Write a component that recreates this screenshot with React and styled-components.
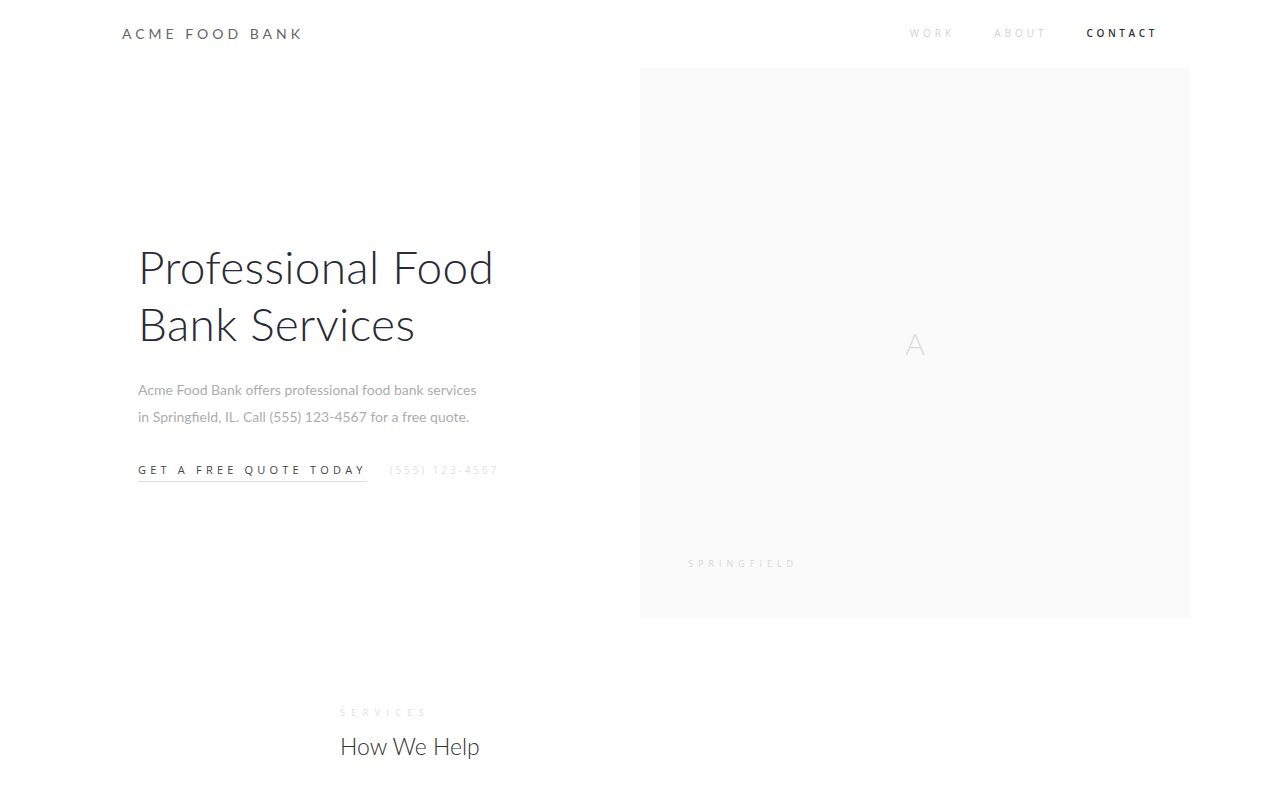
import React from "react";
import styled, { createGlobalStyle } from "styled-components";

const GlobalStyle = createGlobalStyle`
  html, body {
    margin: 0;
    padding: 0;
    background: #fff;
  }
  body {
    font-family: "Lato", "Open Sans", sans-serif;
    -webkit-font-smoothing: antialiased;
  }
  * { box-sizing: border-box; }
`;

const navLinks = [
    {label: "Work", active: false},
    {label: "About", active: false},
    {label: "Contact", active: true},
];

const Page = styled.div`
  width: 100%;
  overflow: hidden;
`;

const Header = styled.header`
  max-width: 1100px;
  margin: 0 auto;
  height: 68px;
  padding: 0 32px 2px;
  display: flex;
  align-items: center;
  justify-content: space-between;
`;

const Logo = styled.a`
  font-family: "Lato", sans-serif;
  font-size: 14px;
  font-weight: 400;
  letter-spacing: 4px;
  color: #666;
  text-transform: uppercase;
  text-decoration: none;
`;

const Nav = styled.nav`
  display: flex;
  gap: 39px;
`;

const NavLink = styled.a`
  font-family: "Open Sans", sans-serif;
  font-size: 10px;
  font-weight: ${p => (p.$active ? 600 : 400)};
  letter-spacing: ${p => (p.$active ? "3.6px" : "4px")};
  text-transform: uppercase;
  color: ${p => (p.$active ? "#333" : "#d2d2d2")};
  text-decoration: none;
`;

const Hero = styled.section`
  max-width: 1100px;
  margin: 0 auto;
  display: grid;
  grid-template-columns: 550px 550px;
`;

const HeroText = styled.div`
  padding: 34px 48px 0;
  display: flex;
  flex-direction: column;
  justify-content: center;
`;

const Title = styled.h1`
  margin: 0;
  font-family: "Lato", sans-serif;
  font-weight: 300;
  font-size: 46px;
  line-height: 57px;
  color: #2a2a35;
  letter-spacing: 0.3px;
`;

const Lead = styled.p`
  margin: 24px 0 0;
  max-width: 350px;
  font-family: "Lato", sans-serif;
  font-size: 14px;
  line-height: 27px;
  color: #adadad;
`;

const Actions = styled.div`
  margin-top: 32px;
  display: flex;
  align-items: baseline;
  gap: 27px;
`;

const QuoteLink = styled.a`
  font-family: "Open Sans", sans-serif;
  font-size: 11px;
  font-weight: 400;
  letter-spacing: 4.2px;
  color: #444;
  text-transform: uppercase;
  text-decoration: none;
  padding-bottom: 4px;
  border-bottom: 1px solid #ddd;
  margin-right: -4px;
`;

const Phone = styled.span`
  font-family: "Open Sans", sans-serif;
  font-size: 10px;
  letter-spacing: 2.9px;
  color: #e0e0e0;
`;

const Visual = styled.div`
  position: relative;
  height: 550px;
  background: #fafafa;
  display: flex;
  align-items: center;
  justify-content: center;
`;

const Initial = styled.span`
  font-family: "Lato", sans-serif;
  font-weight: 300;
  font-size: 30px;
  color: #dcdcdc;
`;

const Caption = styled.span`
  position: absolute;
  left: 48px;
  bottom: 48px;
  font-family: "Open Sans", sans-serif;
  font-size: 9px;
  letter-spacing: 5px;
  color: #d6d6d6;
  text-transform: uppercase;
`;

const Services = styled.section`
  max-width: 600px;
  margin: 0 auto;
  padding-top: 88px;
`;

const Eyebrow = styled.div`
  font-family: "Open Sans", sans-serif;
  font-size: 9px;
  letter-spacing: 6.4px;
  color: #dedede;
  text-transform: uppercase;
`;

const SectionTitle = styled.h2`
  margin: 13px 0 0;
  font-family: "Lato", sans-serif;
  font-weight: 300;
  font-size: 23px;
  color: #333;
`;

const App = () => {
    return (
        <Page>
            <GlobalStyle/>
            <Header>
                <Logo href="#">Acme Food Bank</Logo>
                <Nav>
                    {navLinks.map(link => (
                        <NavLink key={link.label} href="#" $active={link.active}>
                            {link.label}
                        </NavLink>
                    ))}
                </Nav>
            </Header>

            <Hero>
                <HeroText>
                    <Title>Professional Food<br/>Bank Services</Title>
                    <Lead>
                        Acme Food Bank offers professional food bank services
                        in Springfield, IL. Call (555) 123-4567 for a free quote.
                    </Lead>
                    <Actions>
                        <QuoteLink href="#">Get a free quote today</QuoteLink>
                        <Phone>(555) 123-4567</Phone>
                    </Actions>
                </HeroText>
                <Visual>
                    <Initial>A</Initial>
                    <Caption>Springfield</Caption>
                </Visual>
            </Hero>

            <Services>
                <Eyebrow>Services</Eyebrow>
                <SectionTitle>How We Help</SectionTitle>
            </Services>
        </Page>
    );
};

export default App;
